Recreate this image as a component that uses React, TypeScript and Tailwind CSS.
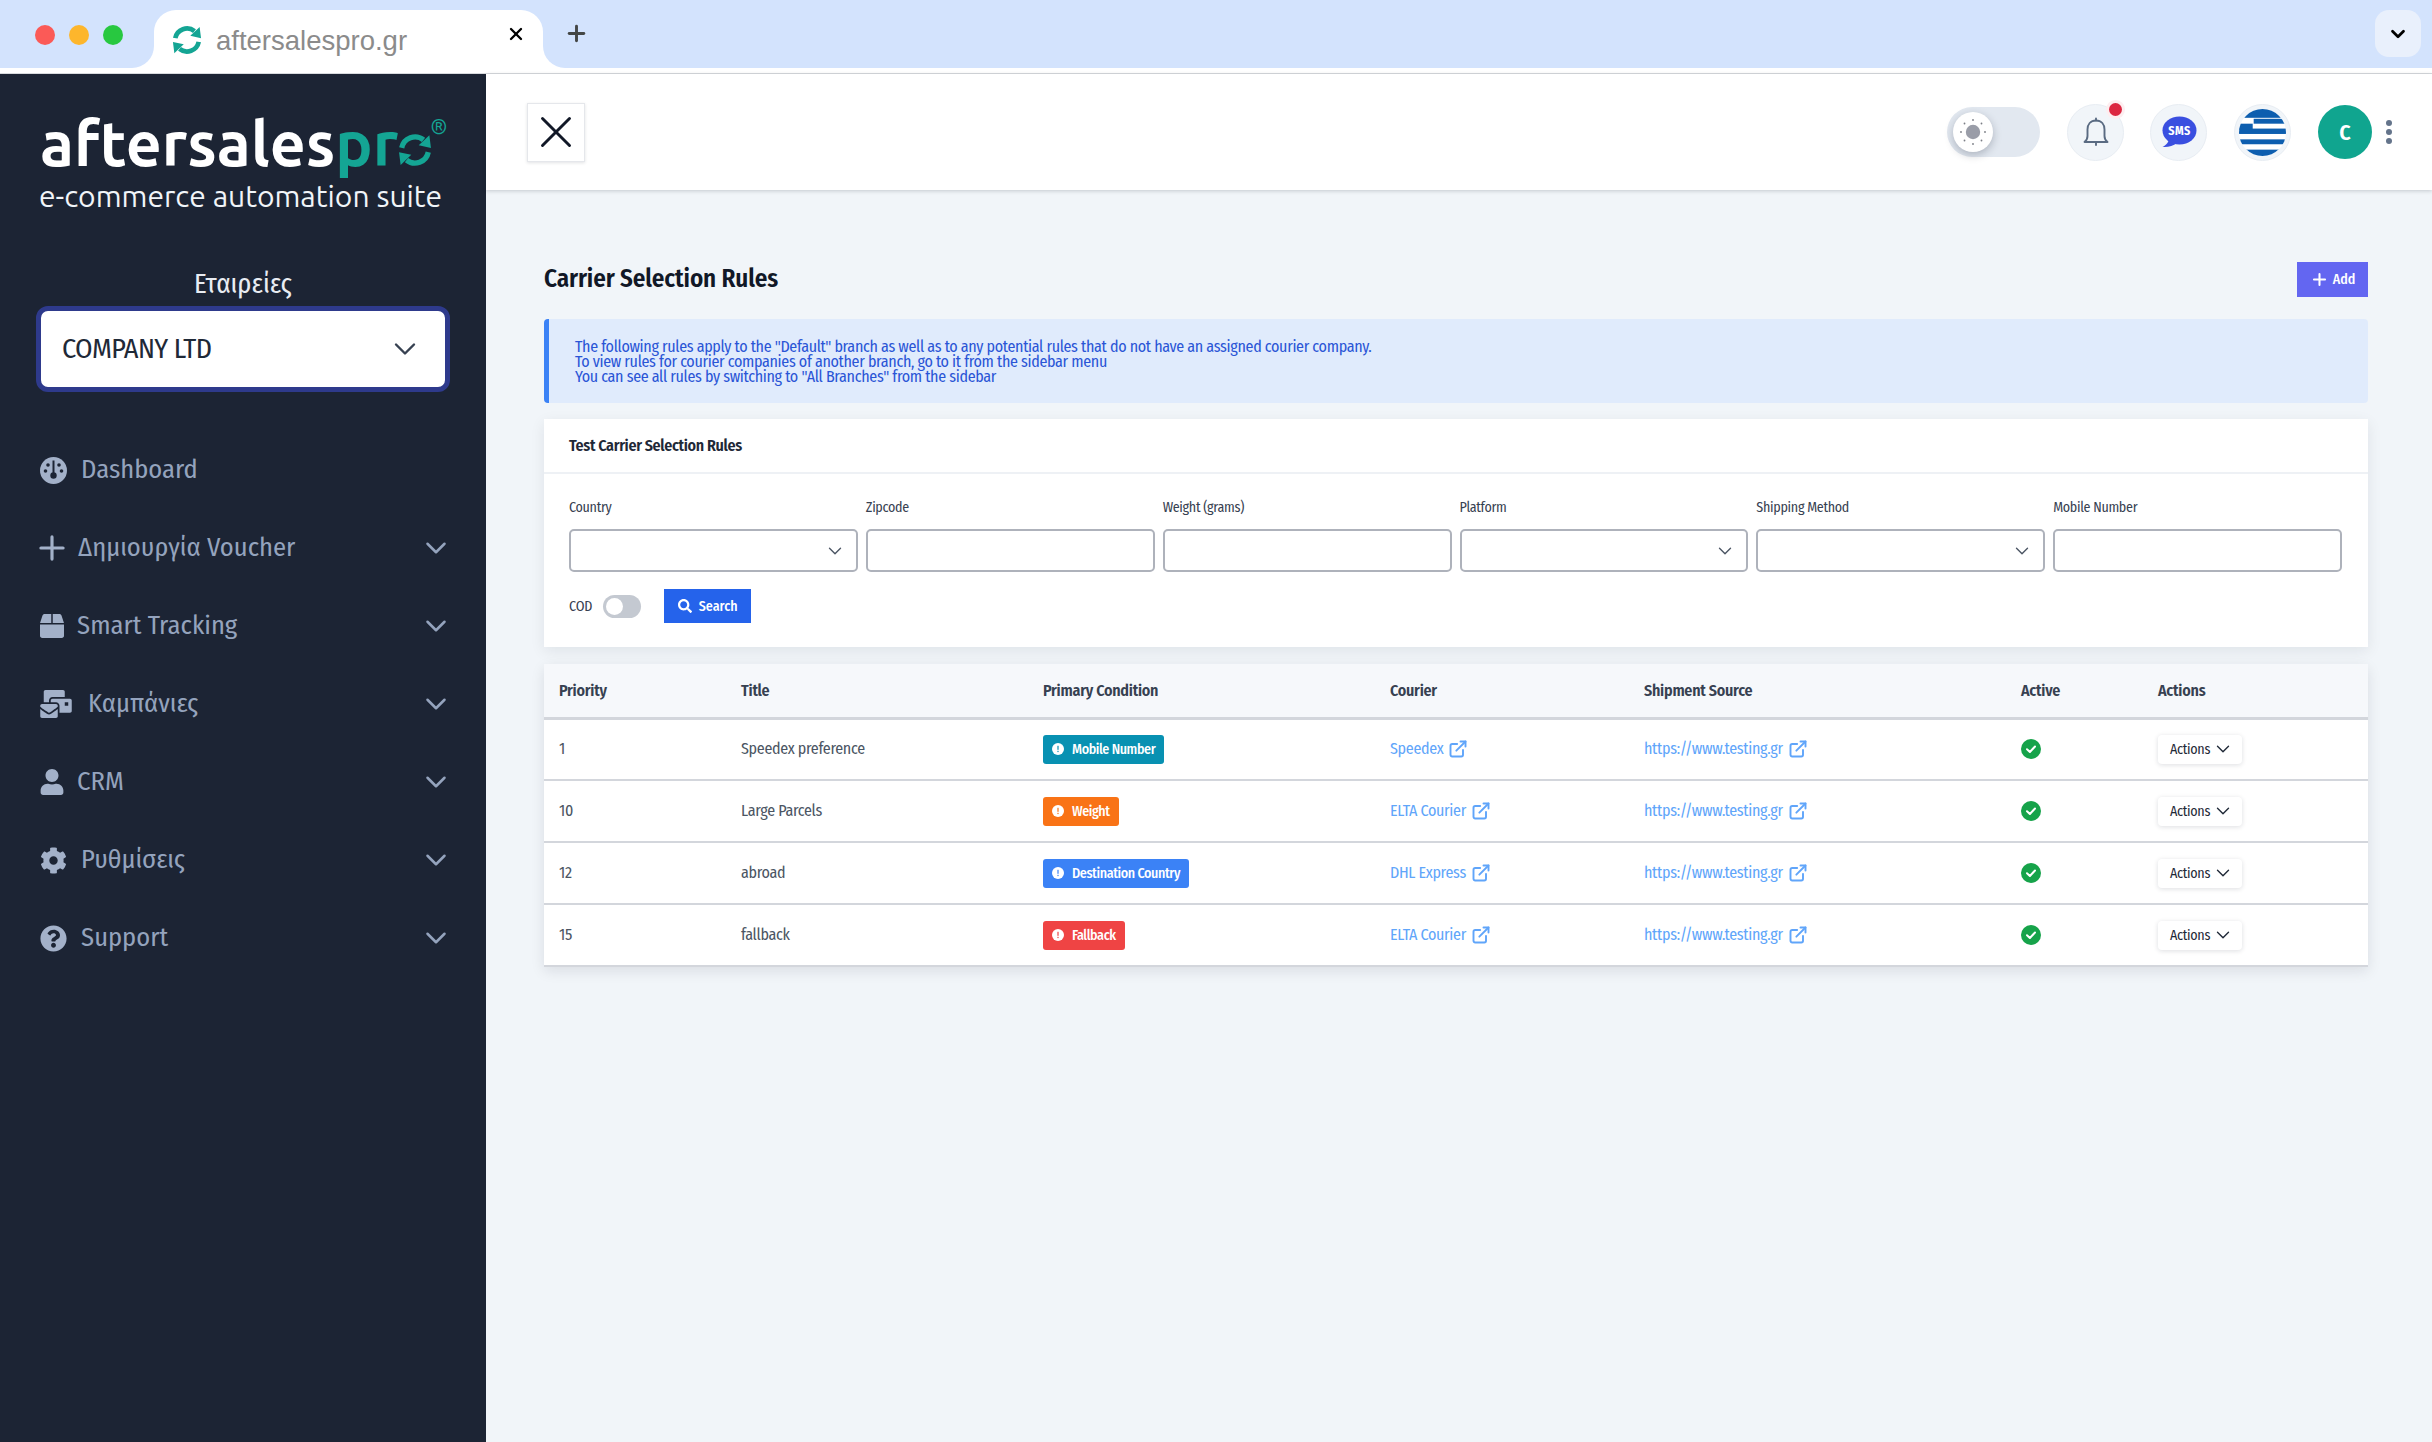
import React from "react";
import { ChevronDown, ExternalLink, Plus, X } from "lucide-react";
import { FaBox, FaMailBulk, FaUser, FaCog, FaQuestionCircle, FaSearch } from "react-icons/fa";

function Cycle({ className, color }: { className: string; color: string }) {
  return (
    <svg viewBox="0 0 32 32" className={className} fill="none">
      <path d="M3.5 14 A12.8 12.8 0 0 1 24 6.5" stroke={color} strokeWidth="5" />
      <path d="M19.5 11.5 L31 14 L29.5 2 Z" fill={color} />
      <path d="M28.5 18 A12.8 12.8 0 0 1 8 25.5" stroke={color} strokeWidth="5" />
      <path d="M12.5 20.5 L1 18 L2.5 30 Z" fill={color} />
    </svg>
  );
}

function Gauge() {
  return (
    <svg viewBox="0 0 27 27" className="w-[27px] h-[27px]">
      <circle cx="13.5" cy="13.5" r="13.5" fill="#a3b1c9" />
      <rect x="12.5" y="3.5" width="2" height="14" fill="#1c2434" />
      <circle cx="13.5" cy="18.5" r="3.2" fill="#1c2434" />
      <circle cx="8" cy="8" r="1.8" fill="#1c2434" />
      <circle cx="19" cy="8" r="1.8" fill="#1c2434" />
      <circle cx="5.5" cy="14" r="1.8" fill="#1c2434" />
      <circle cx="21.5" cy="14" r="1.8" fill="#1c2434" />
    </svg>
  );
}

function Sun() {
  const pts = [0, 45, 90, 135, 180, 225, 270, 315].map((a) => [
    20 + 12 * Math.cos((a * Math.PI) / 180),
    20 + 12 * Math.sin((a * Math.PI) / 180),
  ]);
  return (
    <svg viewBox="0 0 40 40" className="w-[40px] h-[40px]">
      <circle cx="20" cy="20" r="7.2" fill="#9a9da8" />
      {pts.map(([x, y], i) => (
        <circle key={i} cx={x} cy={y} r="0.9" fill="#7b7e85" />
      ))}
    </svg>
  );
}

function Bell() {
  return (
    <svg viewBox="0 0 26 30" className="w-[26px] h-[30px]" fill="none" stroke="#5a6b82" strokeWidth="1.9" strokeLinejoin="round" strokeLinecap="round">
      <path d="M13 3.5 C7.5 3.5 4.5 7.5 4.5 12.5 V19 C4.5 21.5 3.5 23.5 1.5 25 H24.5 C22.5 23.5 21.5 21.5 21.5 19 V12.5 C21.5 7.5 18.5 3.5 13 3.5 Z" />
      <path d="M13 1.5 V3.5 M13 25 V28" />
    </svg>
  );
}

function SmsBubble() {
  return (
    <svg viewBox="0 0 36 32" className="w-[36px] h-[32px]">
      <ellipse cx="18.5" cy="14.5" rx="17" ry="14" fill="#3a4fe0" />
      <path d="M8 22 C8 26 5.5 29 1.5 31 C7 31.5 12 30 16 27 Z" fill="#3a4fe0" />
      <text x="18.5" y="19" textAnchor="middle" fontSize="12" fontWeight="700" fill="#fff" fontFamily="'Fira Sans Condensed','Open Sans',sans-serif" letterSpacing="0.5">SMS</text>
    </svg>
  );
}

function GreekFlag() {
  return (
    <svg viewBox="0 0 48 48" className="w-[47px] h-[47px] rounded-full">
      <rect width="48" height="48" fill="#fff" />
      <g fill="#0d5eaf">
        <rect y="0" width="48" height="9" />
        <rect x="15" y="10" width="33" height="5" />
        <rect y="20" width="48" height="5.5" />
        <rect y="15" width="14" height="6" />
        <rect y="31" width="48" height="5" />
        <rect y="41.5" width="48" height="6.5" />
      </g>
    </svg>
  );
}

function CheckDot() {
  return (
    <svg viewBox="0 0 20 20" className="w-[20px] h-[20px]">
      <circle cx="10" cy="10" r="10" fill="#16a34a" />
      <path d="M6 10.3 L8.9 13 L14 7.5" fill="none" stroke="#fff" strokeWidth="2" strokeLinecap="round" strokeLinejoin="round" />
    </svg>
  );
}

function BadgeDot({ color }: { color: string }) {
  return (
    <svg viewBox="0 0 12 12" className="w-[12px] h-[12px] shrink-0">
      <circle cx="6" cy="6" r="6" fill="#fff" />
      <rect x="5.4" y="2.8" width="1.2" height="4" fill={color} />
      <rect x="5.4" y="7.8" width="1.2" height="1.3" fill={color} />
    </svg>
  );
}

const iconTone = "text-[#a3b1c9]";
const menu = [
  { label: "Dashboard", icon: <Gauge />, ml: "ml-[14px]", chev: false },
  { label: "Δημιουργία Voucher", icon: <Plus className={`w-[38px] h-[38px] -mx-[7px] ${iconTone}`} strokeWidth={2} />, ml: "ml-[14px]", chev: true },
  { label: "Smart Tracking", icon: <FaBox className={`w-[24px] h-[24px] ${iconTone}`} />, ml: "ml-[13px]", chev: true },
  { label: "Καμπάνιες", icon: <FaMailBulk className={`w-[32px] h-[28px] ${iconTone}`} />, ml: "ml-[16px]", chev: true },
  { label: "CRM", icon: <FaUser className={`w-[24px] h-[26px] ${iconTone}`} />, ml: "ml-[13px]", chev: true },
  { label: "Ρυθμίσεις", icon: <FaCog className={`w-[27px] h-[27px] ${iconTone}`} />, ml: "ml-[14px]", chev: true },
  { label: "Support", icon: <FaQuestionCircle className={`w-[27px] h-[27px] ${iconTone}`} />, ml: "ml-[14px]", chev: true },
];

const fields = [
  { label: "Country", select: true },
  { label: "Zipcode", select: false },
  { label: "Weight (grams)", select: false },
  { label: "Platform", select: true },
  { label: "Shipping Method", select: true },
  { label: "Mobile Number", select: false },
];

const rows = [
  { p: "1", title: "Speedex preference", cond: "Mobile Number", bg: "bg-[#0891b2]", hex: "#0891b2", courier: "Speedex" },
  { p: "10", title: "Large Parcels", cond: "Weight", bg: "bg-[#f97316]", hex: "#f97316", courier: "ELTA Courier" },
  { p: "12", title: "abroad", cond: "Destination Country", bg: "bg-[#3b82f6]", hex: "#3b82f6", courier: "DHL Express" },
  { p: "15", title: "fallback", cond: "Fallback", bg: "bg-[#ef4444]", hex: "#ef4444", courier: "ELTA Courier" },
];

const heads = [
  { t: "Priority", w: "w-[182px]" },
  { t: "Title", w: "w-[302px]" },
  { t: "Primary Condition", w: "w-[347px]" },
  { t: "Courier", w: "w-[254px]" },
  { t: "Shipment Source", w: "w-[377px]" },
  { t: "Active", w: "w-[137px]" },
  { t: "Actions", w: "w-[225px]" },
];

export default function App() {
  return (
    <div className="w-[2432px] h-[1442px] overflow-hidden bg-[#f1f5f9] flex flex-col font-['Fira_Sans_Condensed','Open_Sans',sans-serif]">
      <div className="h-[74px] shrink-0 bg-white border-b border-[#d8dade]">
        <div className="h-[68px] flex">
          <div className="w-[154px] bg-[#d3e3fd] rounded-br-[22px] flex items-start gap-[14px] pl-[35px] pt-[25px]">
            <span className="w-[20px] h-[20px] rounded-full bg-[#fb5a57]" />
            <span className="w-[20px] h-[20px] rounded-full bg-[#fdb62c]" />
            <span className="w-[20px] h-[20px] rounded-full bg-[#28c840]" />
          </div>
          <div className="w-[389px] bg-[#d3e3fd] pt-[10px]">
            <div className="h-full bg-white rounded-t-[22px] flex items-start pl-[18px] pr-[17px] pt-[15px]">
              <Cycle className="w-[30px] h-[30px]" color="#14a594" />
              <span className="ml-[14px] font-['Liberation_Sans',sans-serif] text-[27.5px] leading-[32px] text-[#8b8b8b]">aftersalespro.gr</span>
              <X className="ml-auto mt-[-1px] w-[20px] h-[20px] text-black" strokeWidth={2.8} />
            </div>
          </div>
          <div className="flex-1 bg-[#d3e3fd] rounded-bl-[22px] flex items-start pt-[10px] pr-[11px]">
            <Plus className="ml-[21px] mt-[11px] w-[25px] h-[25px] text-[#444746]" strokeWidth={2.8} />
            <div className="ml-auto w-[46px] h-[47px] rounded-[14px] bg-[#e9f0fc] flex items-center justify-center">
              <ChevronDown className="w-[22px] h-[22px] text-black" strokeWidth={3} />
            </div>
          </div>
        </div>
      </div>
      <div className="flex-1 flex min-h-0">
        <aside className="w-[486px] shrink-0 bg-[#1c2434] flex flex-col">
          <div className="pl-[39px] pt-[33px] font-['Ubuntu','Open_Sans',sans-serif]">
            <div className="flex items-start h-[71px] pl-[1px]">
              <span className="text-[62.5px] leading-[72px] font-bold text-white">aftersales</span>
              <span className="text-[62.5px] leading-[72px] font-bold text-[#14a594]">pr</span>
              <Cycle className="w-[34px] h-[34px] mt-[26px]" color="#14a594" />
              <span className="text-[21px] text-[#14a594] leading-none mt-[9px] -ml-[2px]">®</span>
            </div>
            <div className="text-[30px] leading-[36px] text-[#f1f5f9]">e-commerce automation suite</div>
          </div>
          <div className="mt-[53px] text-center text-[27px] leading-[34px] text-[#e8ecf2]">Εταιρείες</div>
          <div className="mx-[36px] mt-[5px] h-[86px] rounded-[12px] bg-white border-[5px] border-[#2e3a8c] flex items-center pl-[21px] pr-[22px]">
            <span className="text-[28px] tracking-[-0.55px] text-[#1f2937]">COMPANY LTD</span>
            <ChevronDown className="ml-auto w-[36px] h-[36px] text-[#374151]" strokeWidth={1.6} />
          </div>
          <nav className="mt-[39px] flex flex-col">
            {menu.map((m) => (
              <div key={m.label} className="h-[78px] flex items-center pl-[40px] pr-[33px]">
                {m.icon}
                <span className={`${m.ml} text-[26.5px] text-[#94a3bd]`}>{m.label}</span>
                {m.chev && <ChevronDown className="ml-auto w-[34px] h-[34px] text-[#94a3bd]" strokeWidth={1.8} />}
              </div>
            ))}
          </nav>
        </aside>
        <main className="flex-1 min-w-0 flex flex-col">
          <header className="h-[116px] shrink-0 bg-white shadow-[0_1px_4px_rgba(15,23,42,0.2)] flex items-center pl-[41px] pr-[40px]">
            <div className="w-[58px] h-[59px] border border-[#e5e7eb] shadow-[0_1px_3px_rgba(15,23,42,0.12)] flex items-center justify-center">
              <X className="w-[54px] h-[54px] text-[#111827] shrink-0" strokeWidth={1.3} />
            </div>
            <div className="ml-auto w-[93px] h-[50px] rounded-full bg-[#e2e8f0] flex items-center pl-[6px]">
              <div className="w-[40px] h-[40px] rounded-full bg-white shadow-[0_3px_8px_rgba(15,23,42,0.25)]">
                <Sun />
              </div>
            </div>
            <div className="relative ml-[27px] w-[57px] h-[57px] rounded-full bg-[#f1f5f9] border border-[#e8edf3] flex items-center justify-center">
              <Bell />
              <span className="absolute -top-[2px] right-[1px] w-[13px] h-[13px] rounded-full bg-[#dc2640] ring-[3px] ring-[#fdeef0]" />
            </div>
            <div className="ml-[26px] w-[57px] h-[57px] rounded-full bg-[#f1f5f9] border border-[#e8edf3] flex items-center justify-center">
              <SmsBubble />
            </div>
            <div className="ml-[27px] w-[57px] h-[57px] rounded-full bg-[#f1f5f9] border border-[#e8edf3] flex items-center justify-center">
              <GreekFlag />
            </div>
            <div className="ml-[27px] w-[54px] h-[54px] rounded-full bg-[#10a58f] flex items-center justify-center text-white text-[22px] font-semibold">C</div>
            <div className="ml-[14px] flex flex-col gap-[3px]">
              <span className="w-[6px] h-[6px] rounded-full bg-[#64748b]" />
              <span className="w-[6px] h-[6px] rounded-full bg-[#64748b]" />
              <span className="w-[6px] h-[6px] rounded-full bg-[#64748b]" />
            </div>
          </header>
          <div className="pl-[58px] pr-[64px] pt-[72px]">
            <div className="flex items-center justify-between h-[35px]">
              <h1 className="text-[25px] leading-[32px] tracking-[-0.1px] font-semibold text-[#111827] mb-[2px]">Carrier Selection Rules</h1>
              <div className="w-[71px] h-[35px] bg-[#6366f1] flex items-center justify-center gap-[4px] text-white text-[14px] font-medium">
                <Plus className="w-[19px] h-[19px]" strokeWidth={2.6} />
                <span>Add</span>
              </div>
            </div>
            <div className="mt-[22px] h-[84px] rounded-[4px] border-l-[5px] border-[#3b82f6] bg-[#e0ebfc] pl-[26px] flex flex-col justify-center text-[16px] leading-[15px] tracking-[-0.33px] text-[#2a55d6]">
              <div>The following rules apply to the "Default" branch as well as to any potential rules that do not have an assigned courier company.</div>
              <div>To view rules for courier companies of another branch, go to it from the sidebar menu</div>
              <div>You can see all rules by switching to "All Branches" from the sidebar</div>
            </div>
            <section className="mt-[16px] h-[228px] bg-white shadow-[0_4px_14px_rgba(15,23,42,0.08)]">
              <div className="h-[55px] border-b-2 border-[#eef1f5] pl-[25px] flex items-center text-[16px] tracking-[-0.33px] font-semibold text-[#1f2937]">Test Carrier Selection Rules</div>
              <div className="pl-[25px] pr-[26px] pt-[24px]">
                <div className="grid grid-cols-6 gap-x-[8px]">
                  {fields.map((f) => (
                    <label key={f.label} className="block">
                      <span className="block text-[14px] leading-[20px] tracking-[-0.3px] text-[#374151]">{f.label}</span>
                      <span className="mt-[11px] h-[43px] border-2 border-[#aeb2bb] rounded-[5px] flex items-center justify-end pr-[10px]">
                        {f.select && <ChevronDown className="w-[22px] h-[22px] text-[#4b5563]" strokeWidth={1.5} />}
                      </span>
                    </label>
                  ))}
                </div>
                <div className="mt-[17px] flex items-center">
                  <span className="text-[14px] tracking-[-0.2px] text-[#374151]">COD</span>
                  <span className="ml-[11px] w-[38px] h-[23px] rounded-full bg-[#c4c9d1] flex items-center pl-[3px]">
                    <span className="w-[17px] h-[17px] rounded-full bg-white" />
                  </span>
                  <span className="ml-[23px] w-[87px] h-[34px] bg-[#2563eb] flex items-center justify-center gap-[7px] text-white text-[14px] font-medium">
                    <FaSearch className="w-[14px] h-[14px]" />
                    Search
                  </span>
                </div>
              </div>
            </section>
            <div className="mt-[17px] bg-white shadow-[0_4px_14px_rgba(15,23,42,0.1)] rounded-t-[4px]">
              <table className="w-full table-fixed border-collapse">
                <thead>
                  <tr className="h-[54px] bg-[#f6f8fb] border-b-[3px] border-[#d3d6dc]">
                    {heads.map((h) => (
                      <th key={h.t} className={`${h.w} pl-[15px] pt-[2px] text-left text-[16px] tracking-[-0.25px] font-semibold text-[#374151]`}>{h.t}</th>
                    ))}
                  </tr>
                </thead>
                <tbody>
                  {rows.map((r) => (
                    <tr key={r.p} className="h-[62px] border-b-2 border-[#d3d6dc] text-[16px] tracking-[-0.32px] text-[#4b5563]">
                      <td className="pl-[15px]">{r.p}</td>
                      <td className="pl-[15px]">{r.title}</td>
                      <td className="pl-[15px]">
                        <span className={`${r.bg} inline-flex items-center h-[29px] rounded-[3px] pl-[9px] pr-[9px] gap-[8px] text-white text-[14px] tracking-[-0.4px] font-medium`}>
                          <BadgeDot color={r.hex} />
                          {r.cond}
                        </span>
                      </td>
                      <td className="pl-[15px]">
                        <span className="inline-flex items-center gap-[5px] text-[#60a5fa]">
                          {r.courier}
                          <ExternalLink className="w-[20px] h-[20px]" strokeWidth={2.3} />
                        </span>
                      </td>
                      <td className="pl-[15px]">
                        <span className="inline-flex items-center gap-[5px] text-[#60a5fa]">
                          https://www.testing.gr
                          <ExternalLink className="w-[20px] h-[20px]" strokeWidth={2.3} />
                        </span>
                      </td>
                      <td className="pl-[15px]"><CheckDot /></td>
                      <td className="pl-[15px]">
                        <span className="inline-flex items-center pl-[12px] gap-[2px] w-[84px] h-[29px] bg-white rounded-[4px] shadow-[0_1px_5px_rgba(15,23,42,0.14)] text-[14px] tracking-[-0.3px] text-[#1f2937]">
                          Actions
                          <ChevronDown className="w-[22px] h-[22px]" strokeWidth={1.5} />
                        </span>
                      </td>
                    </tr>
                  ))}
                </tbody>
              </table>
            </div>
          </div>
        </main>
      </div>
    </div>
  );
}
